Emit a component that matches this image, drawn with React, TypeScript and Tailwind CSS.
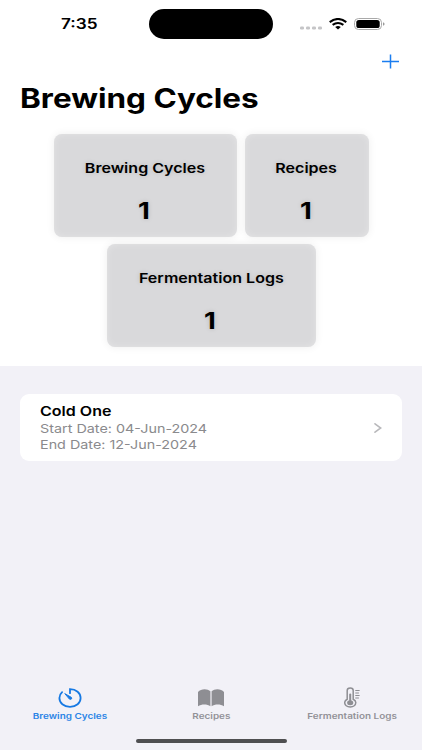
import type { ReactNode } from 'react'
import { clsx } from 'clsx'

function Text({
  className,
  children,
}: {
  className?: string
  children: ReactNode
}) {
  return (
    <span className={clsx('block whitespace-nowrap', className)}>
      {children}
    </span>
  )
}

function StatusBar() {
  return (
    <header className="flex h-[48px] items-center pl-[61px] pr-[37px]">
      <Text className="w-[88px] origin-left scale-x-[1.23] text-[14px] font-semibold leading-none">
        7:35
      </Text>
      <div className="h-[30px] w-[124px] rounded-full bg-black" />
      <div className="ml-auto flex items-center">
        <svg width="22" height="4" viewBox="0 0 22 4" fill="#c5c5c7" className="mt-[7px]">
          <rect x="0" y="0.5" width="4" height="3" rx="1.3" />
          <rect x="6" y="0.5" width="4" height="3" rx="1.3" />
          <rect x="12" y="0.5" width="4" height="3" rx="1.3" />
          <rect x="18" y="0.5" width="4" height="3" rx="1.3" />
        </svg>
        <svg
          width="18"
          height="12"
          viewBox="0 0 18 12"
          fill="none"
          stroke="#000"
          strokeWidth="2"
          className="ml-[7px]"
        >
          <path d="M0.7 4.1Q9-2.2 17.3 4.1" />
          <path d="M3.6 6.9Q9 2.9 14.4 6.9" />
          <path d="M6.2 9.1Q9 6.9 11.8 9.1L9 11.5Z" fill="#000" stroke="none" />
        </svg>
        <svg width="31" height="12" viewBox="0 0 31 12" className="ml-[7.5px]">
          <rect x="0.5" y="0.5" width="27" height="11" rx="4" fill="none" stroke="#a9a9a9" />
          <rect x="2.3" y="2" width="23.4" height="8" rx="2.6" fill="#000" />
          <path d="M29 4.2Q30.6 4.7 30.6 6T29 7.8Z" fill="#999" />
        </svg>
      </div>
    </header>
  )
}

function StatCard({
  title,
  value,
  className,
}: {
  title: string
  value: number
  className?: string
}) {
  return (
    <div
      className={clsx(
        'flex h-[103px] flex-col items-center rounded-[8px] bg-[#d9d9db] pt-[26px] shadow-[0_0_8px_rgba(0,0,0,0.07),inset_0_0_7px_rgba(255,255,255,0.3)]',
        className,
      )}
    >
      <Text className="scale-x-[1.18] text-[13.6px] font-semibold leading-[16px] [text-shadow:0_0_5px_rgba(0,0,0,0.15)]">
        {title}
      </Text>
      <Text className="mr-[2px] mt-[22px] scale-x-[1.22] text-[22.5px] font-bold leading-[26px] [text-shadow:0_0_5px_rgba(0,0,0,0.15)]">
        {value}
      </Text>
    </div>
  )
}

function TimerIcon() {
  return (
    <svg
      width="24"
      height="20"
      viewBox="0 0 24 20"
      fill="none"
      stroke="#1679e3"
      strokeWidth="1.8"
      strokeLinecap="round"
    >
      <path d="M12 5.2V1.2C18.2 1.2 22.6 5 22.6 10S18.2 18.8 12 18.8S1.4 15 1.4 10C1.4 7.8 2.4 5.7 4.1 4.2" />
      <path
        d="M7.1 5.8L13.4 9.4C14.5 10.2 13.1 12 11.7 11.2Z"
        fill="#1679e3"
        strokeWidth="1"
      />
    </svg>
  )
}

function BookIcon() {
  return (
    <svg width="26" height="18" viewBox="0 0 26 18" fill="#8e8e93">
      <path d="M0 3C3-0.6 9.5-0.6 12.4 2.3V17.2C9.2 15 3.5 15 0 17.2Z" />
      <path d="M13.6 2.3C16.5-0.6 23-0.6 26 3V17.2C22.5 15 16.8 15 13.6 17.2Z" />
    </svg>
  )
}

function ThermometerIcon() {
  return (
    <svg width="16" height="21" viewBox="0 0 16 21" fill="none" stroke="#8e8e93">
      <path
        d="M3.2 12.2V3.6C3.2 0.2 9.2 0.2 9.2 3.6V12.2C11.3 13.2 11.8 14.5 11.8 15.6C11.8 18.2 9.4 20 6.2 20S0.7 18.2 0.7 15.6C0.7 14.3 1.3 13.1 3.2 12.2Z"
        strokeWidth="1.5"
      />
      <path d="M6.2 7.5V14" strokeWidth="2" strokeLinecap="round" />
      <ellipse cx="6.2" cy="15.7" rx="3.1" ry="2.5" fill="#8e8e93" stroke="none" />
      <path
        d="M11.3 3.5H15.6M11.3 6H14.9M11.3 8.5H15.6M11.3 11H14.9"
        strokeWidth="1.2"
      />
    </svg>
  )
}

function Tab({
  icon,
  label,
  active,
}: {
  icon: ReactNode
  label: string
  active?: boolean
}) {
  return (
    <button
      type="button"
      className={clsx(
        'flex flex-1 flex-col items-center',
        active ? 'text-[#2b84e6]' : 'text-[#929297]',
      )}
    >
      <span className="flex h-[21px] items-center">{icon}</span>
      <Text className="mt-[3px] scale-x-[1.24] text-[8px] font-semibold leading-[10px]">
        {label}
      </Text>
    </button>
  )
}

export default function App() {
  return (
    <div className="flex h-[750px] w-[422px] flex-col overflow-hidden bg-[#f2f1f7] font-['Inter','Liberation_Sans',sans-serif] text-black">
      <section className="h-[366px] shrink-0 bg-white">
        <StatusBar />
        <div className="flex justify-end pr-[23px] pt-[6px]">
          <svg width="17" height="15" viewBox="0 0 17 15" stroke="#1a7df0" strokeWidth="1.5">
            <path d="M0 7.5H17M8.5 0.5V14.5" />
          </svg>
        </div>
        <h1 className="mt-[14px] pl-[20px]">
          <Text className="origin-left scale-x-[1.166] text-[27px] font-bold leading-[32px]">
            Brewing Cycles
          </Text>
        </h1>
        <div className="mt-[18.6px] flex flex-col items-center gap-[7px]">
          <div className="flex gap-[8px]">
            <StatCard title="Brewing Cycles" value={1} className="w-[183px]" />
            <StatCard title="Recipes" value={1} className="w-[124px]" />
          </div>
          <StatCard title="Fermentation Logs" value={1} className="w-[209px]" />
        </div>
      </section>

      <main className="flex-1 px-[20px] pt-[28px]">
        <div className="flex h-[67px] items-center justify-between rounded-[9px] bg-white px-[20px]">
          <div>
            <Text className="origin-left scale-x-[1.18] text-[13.6px] font-semibold leading-[17px]">
              Cold One
            </Text>
            <Text className="mt-px origin-left scale-x-[1.178] text-[12.2px] leading-[16px] text-[#8a8a8d]">
              Start Date: 04-Jun-2024
            </Text>
            <Text className="origin-left scale-x-[1.178] text-[12.2px] leading-[16px] text-[#8a8a8d]">
              End Date: 12-Jun-2024
            </Text>
          </div>
          <svg
            width="8"
            height="10"
            viewBox="0 0 8 10"
            fill="none"
            stroke="#b8b8bb"
            strokeWidth="1.6"
            strokeLinecap="round"
          >
            <path d="M1 0.8L6.8 5L1 9.2" />
          </svg>
        </div>
      </main>

      <nav className="flex h-[52px] shrink-0">
        <Tab active icon={<TimerIcon />} label="Brewing Cycles" />
        <Tab icon={<BookIcon />} label="Recipes" />
        <Tab icon={<ThermometerIcon />} label="Fermentation Logs" />
      </nav>
      <div className="flex h-[11px] shrink-0 justify-center">
        <div className="h-[4px] w-[151px] rounded-full bg-[#4f4f51]" />
      </div>
    </div>
  )
}
